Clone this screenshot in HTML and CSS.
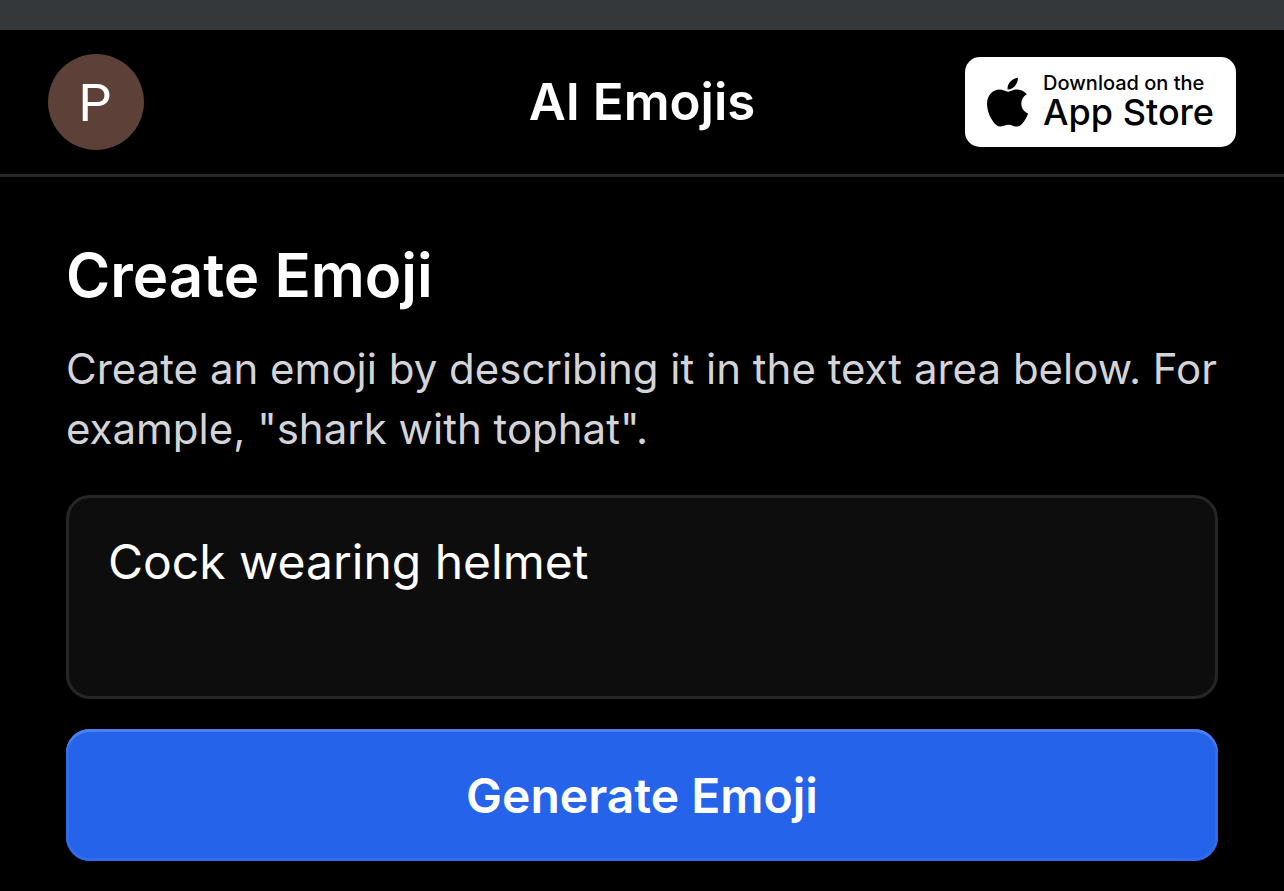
FILE: index.html
```html
<!DOCTYPE html>
<html lang="en">
<head>
    <meta charset="UTF-8">
    <title>AI Emojis</title>
    <link rel="stylesheet" href="styles.css">
</head>
<body>
    <div class="status-bar"></div>

    <header class="header">
        <div class="header-side">
            <button class="avatar" type="button" aria-label="Account">P</button>
        </div>
        <h1 class="logo">AI Emojis</h1>
        <div class="header-side header-right">
            <a class="store-badge" href="#">
                <svg class="apple" viewBox="4 30 376 449" aria-hidden="true">
                    <path d="M318.700 268.700c-.2-36.700 16.400-64.400 50-84.800-18.800-26.900-47.200-41.700-84.700-44.600-35.500-2.800-74.300 20.700-88.500 20.700-15 0-49.400-19.700-76.400-19.700C63.300 141.200 4 184.800 4 273.500q0 39.300 14.400 81.200c12.800 36.700 59 126.700 107.200 125.200 25.200-.6 43-17.900 75.800-17.900 31.800 0 48.300 17.900 76.400 17.900 48.600-.7 90.400-82.500 102.600-119.300-65.200-30.700-61.700-90-61.700-91.900zm-56.600-164.200c27.300-32.400 24.800-61.900 24-72.500-24.100 1.400-52 16.400-67.900 34.900-17.500 19.800-27.800 44.300-25.600 71.900 26.100 2 49.900-11.400 69.500-34.300z"/>
                </svg>
                <span class="store-text">
                    <span class="store-small">Download on the</span>
                    <span class="store-big">App Store</span>
                </span>
            </a>
        </div>
    </header>

    <main class="content">
        <h2>Create Emoji</h2>
        <label class="description" for="prompt">Create an emoji by describing it in the text area below. For example, "shark with tophat".</label>
        <textarea id="prompt" spellcheck="false">Cock wearing helmet</textarea>
        <button class="btn-generate" type="button">Generate Emoji</button>
    </main>
</body>
</html>
```

FILE: styles.css
```css
* {
    box-sizing: border-box;
}
body {
    margin: 0;
    background: #000;
    color: #fff;
    font-family: Inter, sans-serif;
}
.status-bar {
    height: 30px;
    background: #35383a;
}
.header {
    display: flex;
    align-items: center;
    padding: 24px 48px;
    border-bottom: 3px solid #27272a;
}
.header-side {
    flex: 1;
    display: flex;
}
.header-right {
    justify-content: flex-end;
}
.avatar {
    width: 96px;
    height: 96px;
    padding: 2px 2px 0 0;
    border: none;
    border-radius: 50%;
    background: #5d4037;
    color: #fff;
    font-family: Roboto, sans-serif;
    font-size: 52px;
    cursor: pointer;
}
.logo {
    margin: 0;
    font-size: 51px;
    font-weight: 600;
    line-height: 72px;
}
.store-badge {
    display: flex;
    align-items: center;
    gap: 15px;
    height: 90px;
    padding: 0 22px;
    border-radius: 15px;
    background: #fff;
    color: #000;
    text-decoration: none;
}
.apple {
    width: 41px;
    height: 50px;
}
.store-text {
    display: flex;
    flex-direction: column;
}
.store-small {
    font-size: 20px;
    font-weight: 500;
    line-height: 20px;
}
.store-big {
    font-size: 36px;
    font-weight: 500;
    line-height: 38px;
}
.content {
    display: flex;
    flex-direction: column;
    padding: 62px 66px 30px;
}
h2 {
    margin: 0 0 28px;
    font-size: 60px;
    font-weight: 600;
    line-height: 72px;
}
.description {
    margin-bottom: 36px;
    color: #d4d4d8;
    font-size: 42px;
    line-height: 60px;
}
textarea {
    height: 204px;
    margin-bottom: 30px;
    padding: 28px 39px;
    border: 3px solid #262626;
    border-radius: 24px;
    background: #0d0d0d;
    color: #fff;
    font-family: inherit;
    font-size: 48px;
    line-height: 72px;
    resize: none;
    outline: none;
}
.btn-generate {
    height: 132px;
    border: none;
    border-radius: 24px;
    background: #2563eb;
    box-shadow: inset 0 3px 0 #4d80ee, inset 0 0 0 3px #326bea;
    color: #fff;
    font-family: inherit;
    font-size: 48px;
    font-weight: 600;
    cursor: pointer;
}
```
